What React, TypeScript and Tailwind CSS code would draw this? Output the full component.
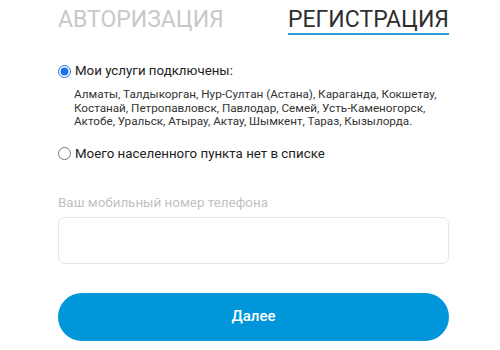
import { useState } from "react"

const cities = [
  "Алматы, Талдыкорган, Нур-Султан (Астана), Караганда, Кокшетау,",
  "Костанай, Петропавловск, Павлодар, Семей, Усть-Каменогорск,",
  "Актобе, Уральск, Атырау, Актау, Шымкент, Тараз, Кызылорда.",
]

export default function App() {
  const [choice, setChoice] = useState("connected")

  return (
    <div className="h-[350px] w-[500px] overflow-hidden bg-white font-['Roboto','Liberation_Sans',sans-serif]">
      <div className="ml-[58px] w-[391px]">
        {/* Tabs */}
        <div className="flex items-start justify-between pt-[7px]">
          <button className="text-[23px] leading-[26px] text-[#c8c8c8]">
            АВТОРИЗАЦИЯ
          </button>
          <button className="border-b-2 border-[#2b9ad6] text-[23px] leading-[26px] text-[#2e2e2e]">
            РЕГИСТРАЦИЯ
          </button>
        </div>

        {/* Options */}
        <div className="mt-[26px] flex flex-col">
          <label className="flex items-center gap-[4px] text-[13.3px] leading-[20px] text-[#222]">
            <input
              type="radio"
              name="city"
              checked={choice === "connected"}
              onChange={() => setChoice("connected")}
              className="m-0 h-[13px] w-[13px] accent-[#1a73e8]"
            />
            Мои услуги подключены:
          </label>
          <p className="mt-[7px] pl-[16px] text-[11.7px] leading-[13.5px] text-[#333]">
            {cities.map((line) => (
              <span key={line} className="block">
                {line}
              </span>
            ))}
          </p>
          <label className="mt-[15px] flex items-center gap-[4px] text-[13.3px] leading-[20px] text-[#222]">
            <input
              type="radio"
              name="city"
              checked={choice === "none"}
              onChange={() => setChoice("none")}
              className="m-0 h-[13px] w-[13px] accent-[#1a73e8]"
            />
            Моего населенного пункта нет в списке
          </label>
        </div>

        {/* Phone */}
        <div className="mt-[31px]">
          <p className="text-[13.4px] leading-[16px] text-[#c2c2c2]">
            Ваш мобильный номер телефона
          </p>
          <input
            type="tel"
            className="mt-[6px] block h-[47px] w-full rounded-[7px] border border-[#e6e6e6] px-3 outline-none"
          />
        </div>

        <button className="mt-[29px] h-[48px] w-full rounded-full bg-[#0096d9] text-[15px] font-medium text-white">
          Далее
        </button>
      </div>
    </div>
  )
}
